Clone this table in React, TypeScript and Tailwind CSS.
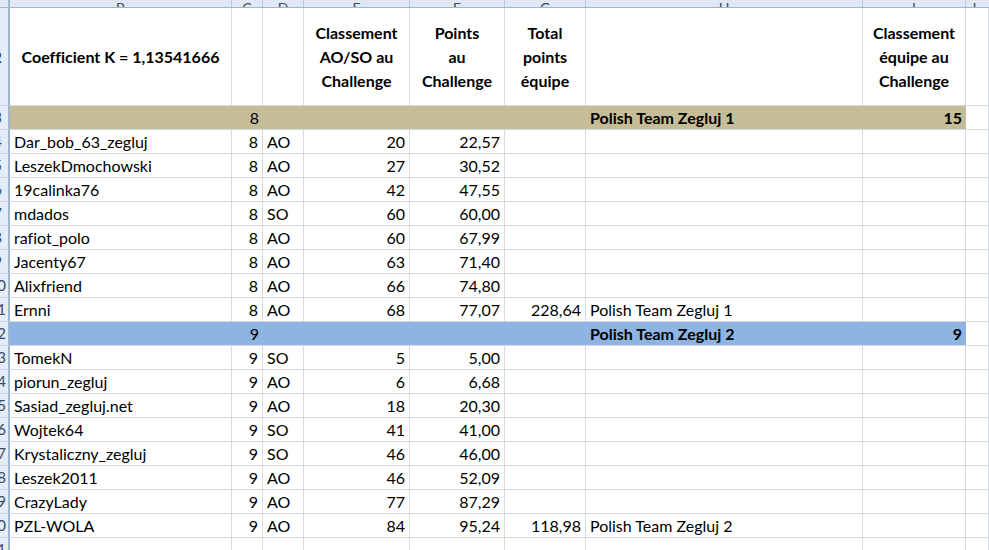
const COLS = ['w-[222px]', 'w-[31px]', 'w-[41px]', 'w-[106px]', 'w-[95px]', 'w-[81px]', 'w-[277px]', 'w-[103px]'];
const LETTERS = ['B', 'C', 'D', 'E', 'F', 'G', 'H', 'I'];

type Player = [string, number, string, number, string, string?, string?];

const TEAM1: Player[] = [
  ['Dar_bob_63_zegluj', 8, 'AO', 20, '22,57'],
  ['LeszekDmochowski', 8, 'AO', 27, '30,52'],
  ['19calinka76', 8, 'AO', 42, '47,55'],
  ['mdados', 8, 'SO', 60, '60,00'],
  ['rafiot_polo', 8, 'AO', 60, '67,99'],
  ['Jacenty67', 8, 'AO', 63, '71,40'],
  ['Alixfriend', 8, 'AO', 66, '74,80'],
  ['Ernni', 8, 'AO', 68, '77,07', '228,64', 'Polish Team Zegluj 1'],
];

const TEAM2: Player[] = [
  ['TomekN', 9, 'SO', 5, '5,00'],
  ['piorun_zegluj', 9, 'AO', 6, '6,68'],
  ['Sasiad_zegluj.net', 9, 'AO', 18, '20,30'],
  ['Wojtek64', 9, 'SO', 41, '41,00'],
  ['Krystaliczny_zegluj', 9, 'SO', 46, '46,00'],
  ['Leszek2011', 9, 'AO', 46, '52,09'],
  ['CrazyLady', 9, 'AO', 77, '87,29'],
  ['PZL-WOLA', 9, 'AO', 84, '95,24', '118,98', 'Polish Team Zegluj 2'],
];

const cell = 'shrink-0 h-full border-r border-b border-[#d5d9e0] px-[4px] overflow-hidden whitespace-nowrap flex items-center';

// row numbers are centred in a header that is scrolled mostly out of view
function RowHead({ n }: { n: number }) {
  return (
    <div className="shrink-0 w-[10px] h-full bg-[#e4ecf7] border-r-2 border-b border-r-[#9eb6ce] border-b-[#c5d3e3] overflow-hidden flex items-center justify-end text-[#3d4a5c] text-[15px]">
      <span className={n < 10 ? 'mr-[6px]' : 'mr-[2px]'}>{n}</span>
    </div>
  );
}

function PlayerRow({ p, n }: { p: Player; n: number }) {
  const [name, team, type, rank, pts, total, label] = p;
  return (
    <div className="flex h-[24px]">
      <RowHead n={n} />
      <div className={`${cell} ${COLS[0]}`}>{name}</div>
      <div className={`${cell} ${COLS[1]} justify-end`}>{team}</div>
      <div className={`${cell} ${COLS[2]}`}>{type}</div>
      <div className={`${cell} ${COLS[3]} justify-end`}>{rank}</div>
      <div className={`${cell} ${COLS[4]} justify-end`}>{pts}</div>
      <div className={`${cell} ${COLS[5]} justify-end`}>{total}</div>
      <div className={`${cell} ${COLS[6]}`}>{label}</div>
      <div className={`${cell} ${COLS[7]}`} />
      <div className={`${cell} flex-1`} />
    </div>
  );
}

function GroupRow({ n, team, label, place, color }: { n: number; team: number; label: string; place: number; color: string }) {
  return (
    <div className="flex h-[24px]">
      <RowHead n={n} />
      <div className={`flex h-full border-b border-[#d5d9e0] ${color}`}>
        <div className="shrink-0 w-[222px]" />
        <div className="shrink-0 w-[31px] px-[4px] flex items-center justify-end">{team}</div>
        <div className="shrink-0 w-[41px]" />
        <div className="shrink-0 w-[106px]" />
        <div className="shrink-0 w-[95px]" />
        <div className="shrink-0 w-[81px]" />
        <div className="shrink-0 w-[277px] px-[4px] flex items-center font-bold">{label}</div>
        <div className="shrink-0 w-[103px] px-[4px] flex items-center justify-end font-bold">{place}</div>
      </div>
      <div className={`${cell} flex-1`} />
    </div>
  );
}

function HeadText({ lines }: { lines: string[] }) {
  return (
    <span className="text-center">
      {lines.map((l) => (
        <span key={l} className="block">{l}</span>
      ))}
    </span>
  );
}

export default function App() {
  return (
    <div className="w-[989px] h-[550px] overflow-hidden bg-white text-black text-[16px] [font-variant-ligatures:none] font-['Lato','Noto_Sans',sans-serif]">
      {/* column letters, mostly scrolled out of view */}
      <div className="flex h-[8px] bg-[#dfe8f4] border-b border-[#9eb6ce] overflow-hidden">
        <div className="shrink-0 w-[10px] border-r-2 border-[#9eb6ce]" />
        {LETTERS.map((l, i) => (
          <div key={l} className={`shrink-0 ${COLS[i]} border-r border-[#b6c8dc] flex items-end justify-center text-[14px] leading-[12px] text-[#3d4a5c]`}>
            <span className="-mb-[7px]">{l}</span>
          </div>
        ))}
        <div className="flex-1 flex items-end justify-center text-[14px] leading-[12px] text-[#3d4a5c]">
          <span className="-mb-[7px] mr-[8px]">J</span>
        </div>
      </div>

      {/* header row */}
      <div className="flex h-[98px] font-bold leading-[24px]">
        <RowHead n={2} />
        <div className={`${cell} ${COLS[0]} justify-center`}>Coefficient K = 1,13541666</div>
        <div className={`${cell} ${COLS[1]}`} />
        <div className={`${cell} ${COLS[2]}`} />
        <div className={`${cell} ${COLS[3]} justify-center`}>
          <HeadText lines={['Classement', 'AO/SO au', 'Challenge']} />
        </div>
        <div className={`${cell} ${COLS[4]} justify-center`}>
          <HeadText lines={['Points', 'au', 'Challenge']} />
        </div>
        <div className={`${cell} ${COLS[5]} justify-center`}>
          <HeadText lines={['Total', 'points', 'équipe']} />
        </div>
        <div className={`${cell} ${COLS[6]}`} />
        <div className={`${cell} ${COLS[7]} justify-center`}>
          <HeadText lines={['Classement', 'équipe au', 'Challenge']} />
        </div>
        <div className={`${cell} flex-1`} />
      </div>

      <GroupRow n={3} team={8} label="Polish Team Zegluj 1" place={15} color="bg-[#c4bd97]" />
      {TEAM1.map((p, i) => (
        <PlayerRow key={p[0]} p={p} n={4 + i} />
      ))}
      <GroupRow n={12} team={9} label="Polish Team Zegluj 2" place={9} color="bg-[#8db4e2]" />
      {TEAM2.map((p, i) => (
        <PlayerRow key={p[0]} p={p} n={13 + i} />
      ))}
      <div className="flex h-[24px]">
        <RowHead n={21} />
        {COLS.map((c, i) => (
          <div key={i} className={`${cell} ${c}`} />
        ))}
        <div className={`${cell} flex-1`} />
      </div>
    </div>
  );
}
